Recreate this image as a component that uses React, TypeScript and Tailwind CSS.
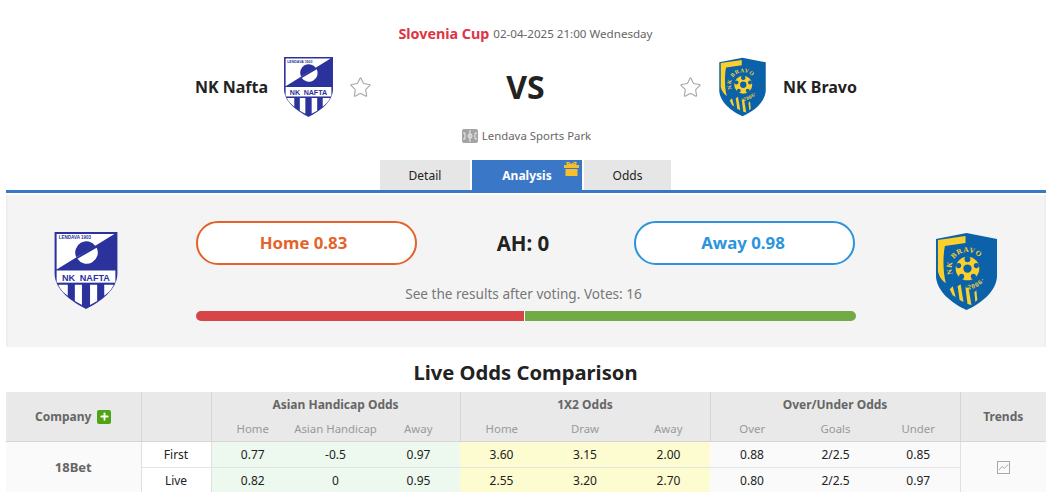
import { Plus, Star } from 'lucide-react';

const font = { fontFamily: '"Noto Sans", Tahoma, sans-serif' };

function NaftaCrest({ className }: { className: string }) {
  return (
    <svg viewBox="1 1 62 76" className={className}>
      <path d="M1 1H63V42C63 58 46 70 32 77C18 70 1 58 1 42Z" fill="#2b329b" />
      <path d="M3 3H60L3 38Z" fill="#fff" />
      <path d="M22.500 26A11 11 0 0 1 41.500 15Z" fill="#2b329b" />
      <path d="M23.500 27.500A11 11 0 0 0 42.500 16.500Z" fill="#fff" />
      <rect x="3" y="39" width="58" height="12" fill="#fff" />
      <text x="5" y="8" fontSize="4.500" fontWeight="700" fill="#2b329b" fontFamily="Liberation Sans, sans-serif">LENDAVA 1903</text>
      <text x="32" y="49" textAnchor="middle" fontSize="9" fontWeight="700" fill="#2b329b" fontFamily="Liberation Sans, sans-serif" wordSpacing="2">NK NAFTA</text>
      <path d="M5 53H14V64C10 61 7 58 5 54ZM21 53H28V73L21 69ZM36 53H43V69L36 73ZM50 53H59V54C57 58 54 61 50 64Z" fill="#fff" />
    </svg>
  );
}

function BravoCrest({ className }: { className: string }) {
  return (
    <svg viewBox="0 0 64 80" className={className}>
      <path d="M1 7L32 1L63 7V44C63 60 46 73 32 79C18 73 1 60 1 44Z" fill="#0b62a8" />
      <path d="M3 8L31 4V11L10 14C8 25 8 40 11 52C7 49 4 45 3 40Z" fill="#fbd02d" />
      <path d="M15 58L18 55L21 66L18 64ZM23 55L26 53L29 71L25 69ZM31 57L34 56L37 74L33 73ZM40 61L42 59L43 69L41 71Z" fill="#fbd02d" />
      <circle cx="33" cy="37" r="12" fill="#fbd02d" />
      <circle cx="33" cy="37" r="4.200" fill="#0b62a8" />
      <circle cx="33" cy="27.500" r="3" fill="#0b62a8" />
      <circle cx="42" cy="34" r="2.600" fill="#0b62a8" />
      <circle cx="24" cy="34" r="2.600" fill="#0b62a8" />
      <circle cx="39" cy="45" r="2.600" fill="#0b62a8" />
      <circle cx="27" cy="45" r="2.600" fill="#0b62a8" />
      <path id="bravoTop" d="M18 42.500A16 16 0 0 1 45 26" fill="none" />
      <path id="bravoBottom" d="M30 58A21 21 0 0 0 54 38" fill="none" />
      <text fontSize="7.500" fontWeight="700" fill="#fbd02d" fontFamily="Liberation Serif, serif" letterSpacing="0.800">
        <textPath href="#bravoTop">NK BRAVO</textPath>
      </text>
      <text fontSize="7" fontWeight="700" fill="#fbd02d" fontFamily="Liberation Serif, serif" letterSpacing="1">
        <textPath href="#bravoBottom">·2006·</textPath>
      </text>
    </svg>
  );
}

function VenueIcon() {
  return (
    <svg viewBox="0 0 16 14" className="w-[16px] h-[14px]">
      <rect width="16" height="14" rx="2" fill="#a3a3a3" />
      <path d="M8 1V13M1 4H3V10H1M15 4H13V10H15" stroke="#eeeeee" fill="none" />
      <circle cx="8" cy="7" r="2" stroke="#eeeeee" fill="none" />
    </svg>
  );
}

function GiftIcon() {
  return (
    <svg viewBox="0 0 15 15" className="w-[15px] h-[15px]">
      <path d="M7.500 4C5 1 2.500 .5 3 2.500C3.300 4 6 4 7.500 4C9 4 11.700 4 12 2.500C12.500 .5 10 1 7.500 4Z" fill="none" stroke="#f5c02c" strokeWidth="1.300" />
      <path d="M0 4H15V7H0ZM1.500 8H13.500V15H1.500Z" fill="#f5c02c" />
    </svg>
  );
}

function TrendIcon() {
  return (
    <svg viewBox="0 0 13 13" className="w-[13px] h-[13px] mx-auto">
      <rect x=".5" y=".5" width="12" height="12" fill="none" stroke="#a0a8b4" />
      <path d="M2 9L5 5.500L7.500 7.500L11 3.500" fill="none" stroke="#b5aaa2" />
    </svg>
  );
}

const asianCols = ['Home', 'Asian Handicap', 'Away'];
const x12Cols = ['Home', 'Draw', 'Away'];
const ouCols = ['Over', 'Goals', 'Under'];

const rows = [
  { label: 'First', asian: ['0.77', '-0.5', '0.97'], x12: ['3.60', '3.15', '2.00'], ou: ['0.88', '2/2.5', '0.85'] },
  { label: 'Live', asian: ['0.82', '0', '0.95'], x12: ['2.55', '3.20', '2.70'], ou: ['0.80', '2/2.5', '0.97'] },
];

export default function App() {
  return (
    <div className="h-[492px] overflow-hidden bg-white text-[12px] text-[#222]" style={font}>
      <header className="h-[190px] flex flex-col items-center">
        <div className="mt-[25px] h-[18px] pl-[2px] flex items-center gap-[4px] text-[11.6px] text-[#666]">
          <span className="text-[14.3px] font-bold text-[#dc3545]">Slovenia Cup</span>
          <span>02-04-2025 21:00 Wednesday</span>
        </div>
        <div className="mt-[14px] w-full h-[60px] pl-[2px] flex items-center">
          <div className="flex-1 flex items-center justify-end">
            <span className="text-[16px] font-bold text-[#222]">NK Nafta</span>
            <NaftaCrest className="ml-[16px] w-[49px] h-[60px]" />
            <Star className="ml-[16px] w-[23px] h-[23px] text-[#a8a8a8]" strokeWidth={1.2} />
          </div>
          <div className="w-[307px] text-center text-[32px] font-bold text-[#222]">VS</div>
          <div className="flex-1 flex items-center">
            <Star className="w-[23px] h-[23px] text-[#a8a8a8]" strokeWidth={1.2} />
            <BravoCrest className="ml-[16px] w-[49px] h-[60px]" />
            <span className="ml-[16px] text-[16px] font-bold text-[#222]">NK Bravo</span>
          </div>
        </div>
        <div className="mt-[9px] h-[20px] pl-[4px] flex items-center gap-[4px] text-[11.4px] text-[#666]">
          <VenueIcon />
          <span>Lendava Sports Park</span>
        </div>
        <nav className="mt-[15px] flex gap-[2px] pl-[2px] text-[12px]">
          <div className="w-[90px] h-[30px] pt-[1px] bg-[#e6e6e6] flex items-center justify-center text-[#222]">Detail</div>
          <div className="relative w-[110px] h-[30px] pt-[1px] bg-[#3a77c6] flex items-center justify-center font-bold text-white">
            Analysis
            <span className="absolute right-[3px] top-[1px]"><GiftIcon /></span>
          </div>
          <div className="w-[87px] h-[30px] pt-[1px] bg-[#e6e6e6] flex items-center justify-center text-[#222]">Odds</div>
        </nav>
      </header>

      <div className="ml-[6px] w-[1040px] h-[3px] bg-[#3a77c6]" />

      <section className="mt-[2px] ml-[6px] w-[1040px] h-[152px] bg-[#f4f4f4] border-x-2 border-[#efefef] flex">
        <div className="w-[188px] pl-[46px] pt-[37px]">
          <NaftaCrest className="w-[64px] h-[77px]" />
        </div>
        <div className="w-[660px] flex flex-col">
          <div className="mt-[26px] h-[44px] flex items-center justify-between">
            <button className="w-[221px] h-[44px] pr-[6px] rounded-full border-2 border-[#e4632b] bg-white text-[16.8px] font-bold text-[#e4632b]">Home 0.83</button>
            <span className="mr-[5px] text-[20.5px] font-bold text-[#222]">AH: 0</span>
            <button className="w-[221px] h-[44px] pr-[3px] mr-[1px] rounded-full border-2 border-[#2b94dc] bg-white text-[16.8px] font-bold text-[#2b94dc]">Away 0.98</button>
          </div>
          <div className="mt-[19px] h-[20px] pr-[5px] flex items-center justify-center text-[13.6px] text-[#777]">See the results after voting. Votes: 16</div>
          <div className="mt-[7px] h-[10px] flex gap-[1px]">
            <div className="w-[328px] rounded-l-full bg-[#d84548]" />
            <div className="flex-1 rounded-r-full bg-[#72ab46]" />
          </div>
        </div>
        <div className="flex-1 pl-[79px] pt-[37px]">
          <BravoCrest className="w-[63px] h-[79px]" />
        </div>
      </section>

      <h2 className="mt-[11px] h-[28px] pl-[2px] leading-[28px] text-center text-[20.2px] font-bold text-[#222]">Live Odds Comparison</h2>

      <table className="mt-[6px] ml-[6px] w-[1040px] table-fixed border-collapse text-[12px]">
        <colgroup>
          <col className="w-[135px]" />
          <col className="w-[70px]" />
          <col className="w-[83px]" />
          <col className="w-[83px]" />
          <col className="w-[83px]" />
          <col className="w-[83px]" />
          <col className="w-[84px]" />
          <col className="w-[83px]" />
          <col className="w-[84px]" />
          <col className="w-[83px]" />
          <col className="w-[83px]" />
          <col className="w-[86px]" />
        </colgroup>
        <thead className="bg-[#e9e9e9] text-[#666]">
          <tr className="h-[25px]">
            <th rowSpan={2} className="pt-[1px] border-r border-[#d5d5d5] font-bold">
              <span className="inline-flex items-center gap-[6px]">
                Company
                <span className="w-[14px] h-[14px] rounded-[2px] bg-[#4ea414] flex items-center justify-center">
                  <Plus className="w-[11px] h-[11px] text-white" strokeWidth={4} />
                </span>
              </span>
            </th>
            <th rowSpan={2} className="border-r border-[#d5d5d5]" />
            <th colSpan={3} className="border-r border-[#d5d5d5] font-bold">Asian Handicap Odds</th>
            <th colSpan={3} className="border-r border-[#d5d5d5] font-bold">1X2 Odds</th>
            <th colSpan={3} className="border-r border-[#d5d5d5] font-bold">Over/Under Odds</th>
            <th rowSpan={2} className="pt-[1px] font-bold">Trends</th>
          </tr>
          <tr className="h-[24px] border-b border-[#d5d5d5] text-[11.4px] text-[#999]">
            {asianCols.map((c, i) => (
              <th key={c} className={`font-normal whitespace-nowrap ${i === 2 ? 'border-r border-[#d5d5d5]' : ''}`}>{c}</th>
            ))}
            {x12Cols.map((c, i) => (
              <th key={c} className={`font-normal ${i === 2 ? 'border-r border-[#d5d5d5]' : ''}`}>{c}</th>
            ))}
            {ouCols.map((c, i) => (
              <th key={c} className={`font-normal ${i === 2 ? 'border-r border-[#d5d5d5]' : ''}`}>{c}</th>
            ))}
          </tr>
        </thead>
        <tbody>
          {rows.map((row, idx) => (
            <tr key={row.label} className="h-[26px] border-b border-[#e4e4e4] text-center">
              {idx === 0 && (
                <td rowSpan={2} className="pt-[2px] text-[13px] bg-[#fafafa] border-r border-[#e0e0e0] font-bold text-[#666]">18Bet</td>
              )}
              <td className="pt-[1px] border-r border-[#e0e0e0] text-[#222]">{row.label}</td>
              {row.asian.map((v, i) => (
                <td key={i} className="pt-[1px] bg-[#edf9ef]">{v}</td>
              ))}
              {row.x12.map((v, i) => (
                <td key={i} className="pt-[1px] bg-[#fdfbd0]">{v}</td>
              ))}
              {row.ou.map((v, i) => (
                <td key={i} className="pt-[1px] bg-[#fafafa]">{v}</td>
              ))}
              {idx === 0 && (
                <td rowSpan={2} className="bg-[#fafafa] border-l border-[#e0e0e0]"><TrendIcon /></td>
              )}
            </tr>
          ))}
        </tbody>
      </table>
    </div>
  );
}
